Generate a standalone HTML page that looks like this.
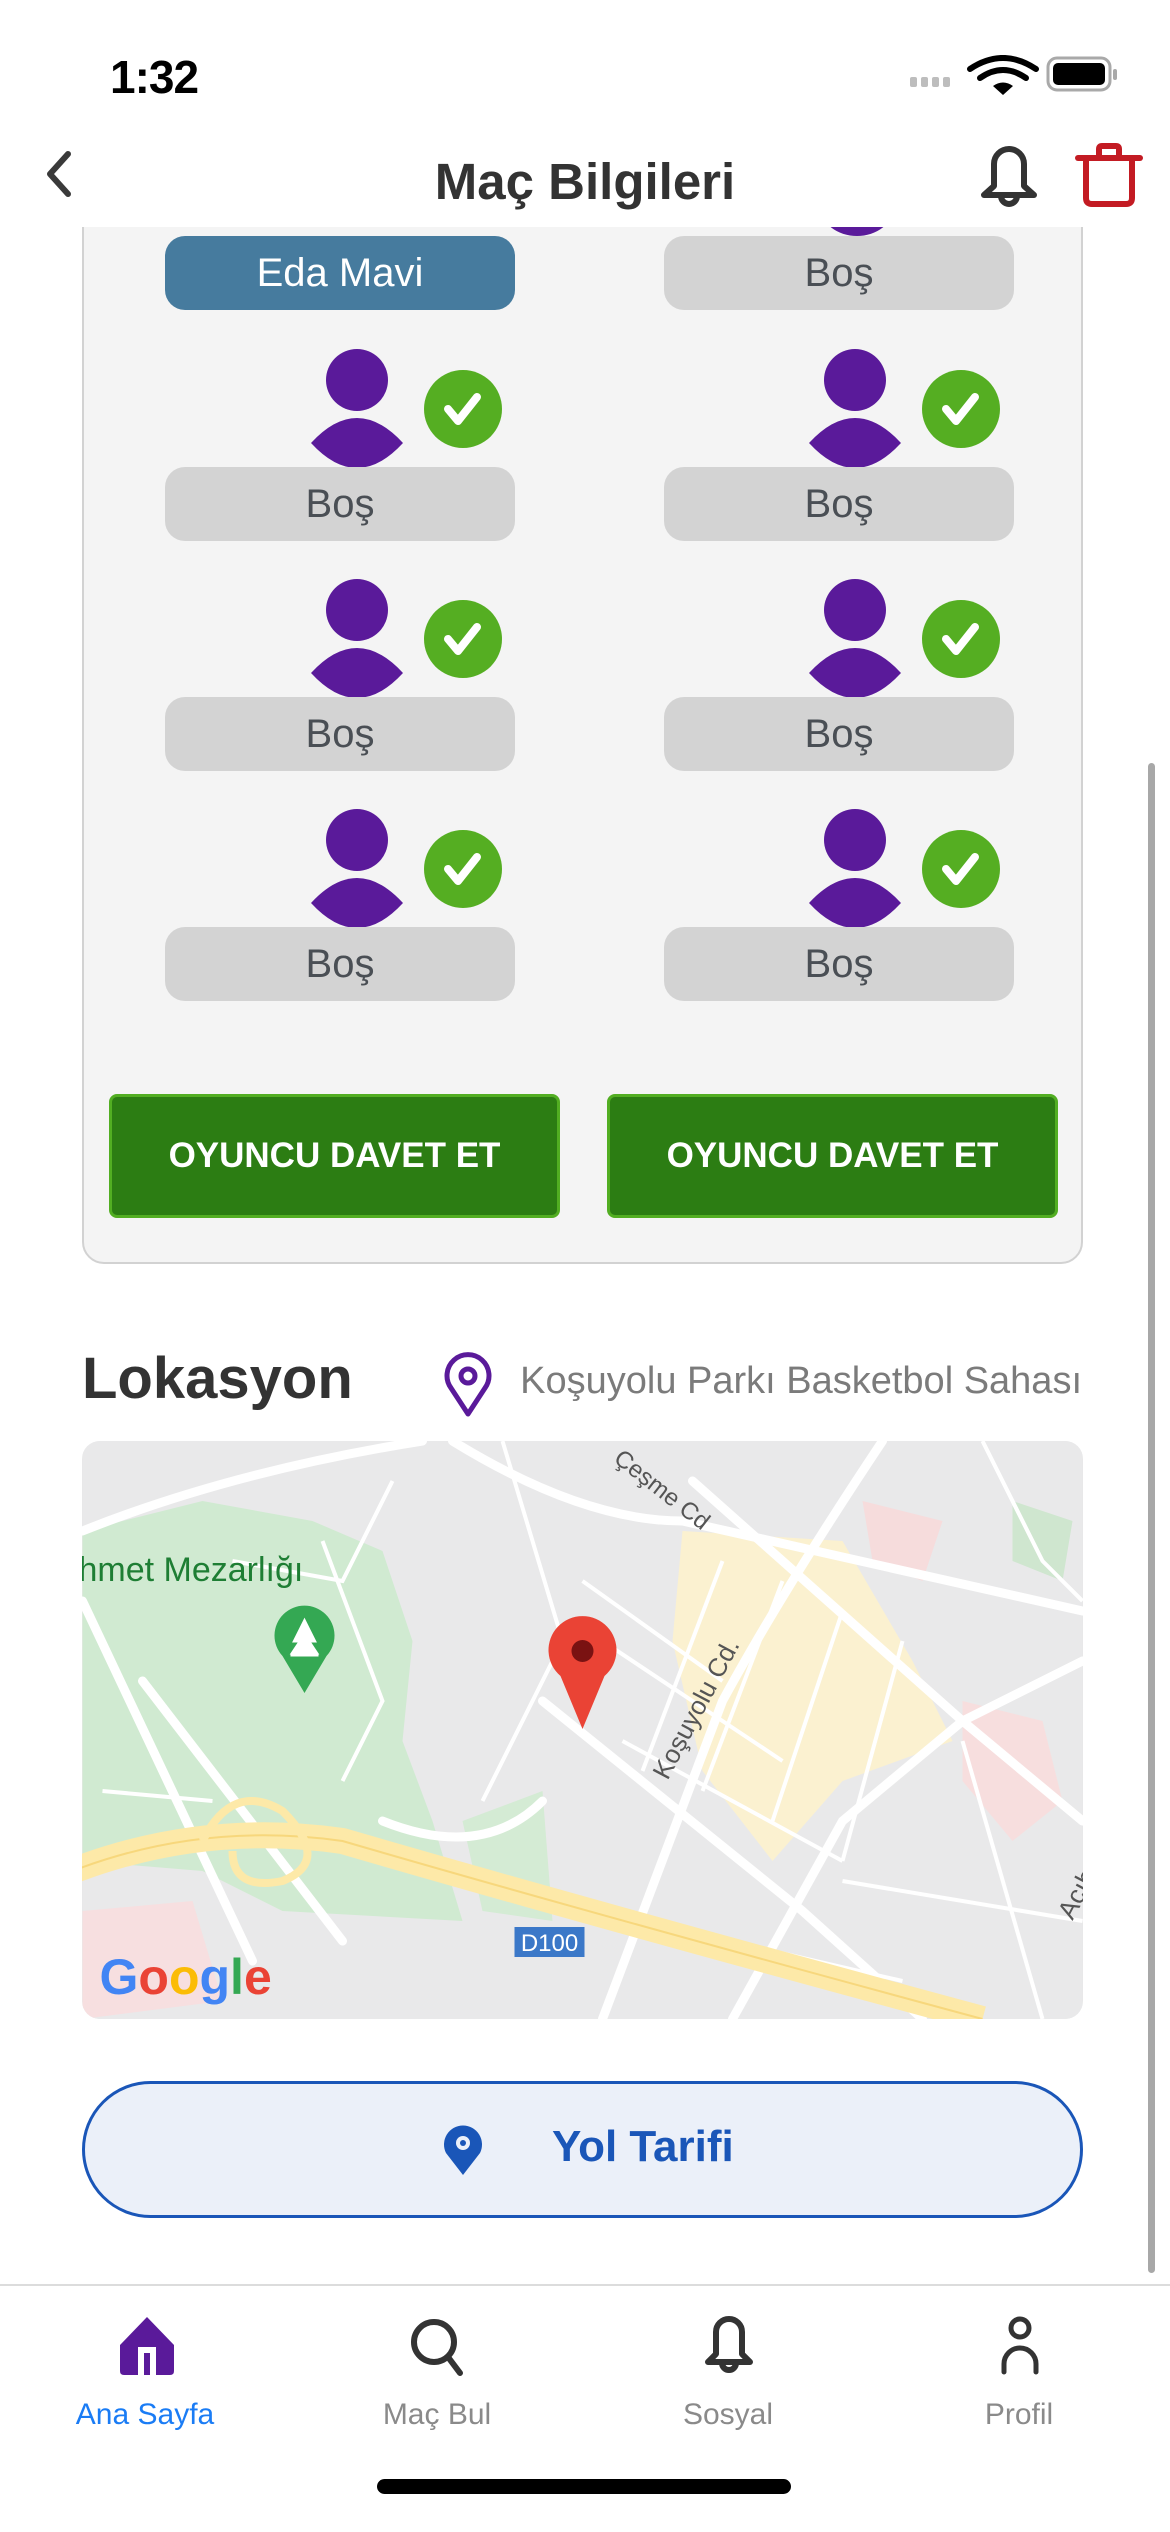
<!DOCTYPE html>
<html><head><meta charset="utf-8">
<style>
*{margin:0;padding:0;box-sizing:border-box}
html,body{width:1170px;height:2532px;background:#fff;overflow:hidden;font-family:"Liberation Sans",Arial,sans-serif}
.a{position:absolute}
.pill{position:absolute;width:350px;height:74px;border-radius:20px;background:#d3d3d3;color:#4a4f55;font-size:40px;text-align:center;line-height:74px}
.btn{position:absolute;top:1094px;width:451px;height:124px;background:#2c7d13;border:3px solid #52ae22;border-radius:8px;color:#fff;font-weight:bold;font-size:35px;text-align:center;line-height:118px}
.tab{position:absolute;top:2398px;width:240px;text-align:center;font-size:30px;color:#8a8a8a}
</style></head><body>

<!-- card -->
<div class="a" style="left:82px;top:180px;width:1001px;height:1084px;background:#f4f4f4;border:2px solid #d2d2d2;border-radius:22px"></div>
<!-- top right partial avatar -->
<div class="a" style="left:821px;top:210px;width:72px;height:26px;overflow:hidden"><div style="margin-top:-30px;width:72px;height:56px;border-radius:50%;background:#5a1a9a"></div></div>
<div class="a" style="left:0;top:0;width:1170px;height:227px;background:#fff"></div>

<!-- status bar -->
<div class="a" style="left:110px;top:50px;font-size:46px;font-weight:bold;color:#000;letter-spacing:-1px">1:32</div>
<svg class="a" style="left:900px;top:55px" width="240" height="40" viewBox="0 0 240 40">
  <g fill="#bdbdbd"><rect x="10" y="22" width="7" height="10" rx="2"/><rect x="21" y="22" width="7" height="10" rx="2"/><rect x="32" y="22" width="7" height="10" rx="2"/><rect x="43" y="22" width="7" height="10" rx="2"/></g>
  <path d="M70 14 Q103 -8 136 14" stroke="#000" stroke-width="6" fill="none" stroke-linecap="round"/>
  <path d="M80 23 Q103 7 126 23" stroke="#000" stroke-width="6" fill="none" stroke-linecap="round"/>
  <path d="M93 31 L103 40 L113 31 Q103 24 93 31Z" fill="#000"/>
  <rect x="148" y="3" width="62" height="32" rx="9" fill="none" stroke="#a9a9a9" stroke-width="3"/>
  <rect x="153" y="8" width="52" height="22" rx="5" fill="#000"/>
  <rect x="213" y="14" width="4" height="11" rx="2" fill="#a9a9a9"/>
</svg>

<!-- nav -->
<svg class="a" style="left:40px;top:148px" width="40" height="52"><path d="M28 6 L10 26 L28 46" stroke="#3a3a3a" stroke-width="6" fill="none" stroke-linecap="round" stroke-linejoin="round"/></svg>
<div class="a" style="left:0;width:1170px;top:152px;text-align:center;font-size:51px;font-weight:bold;color:#333">Maç Bilgileri</div>
<svg class="a" style="left:976px;top:140px" width="66" height="70" viewBox="0 0 66 70">
  <path d="M18 46 V24 A15 15 0 0 1 48 24 V46 L58 55 H8 Z" fill="none" stroke="#333" stroke-width="6" stroke-linejoin="round"/>
  <path d="M25 56 A8 8 0 0 0 41 56" fill="none" stroke="#333" stroke-width="6"/>
</svg>
<svg class="a" style="left:1072px;top:140px" width="74" height="70" viewBox="0 0 74 70">
  <path d="M6 18 H68" stroke="#c31b23" stroke-width="6" stroke-linecap="round"/>
  <path d="M27 17 V9 Q27 6 30 6 H44 Q47 6 47 9 V17" fill="none" stroke="#c31b23" stroke-width="6"/>
  <path d="M14 18 V58 Q14 64 20 64 H54 Q60 64 60 58 V18" fill="none" stroke="#c31b23" stroke-width="6"/>
</svg>

<div class="pill" style="left:165px;top:236px;background:#467b9e;color:#fff">Eda Mavi</div>
<div class="pill" style="left:664px;top:236px">Boş</div>

<!-- rows -->
<svg class="a" style="left:0;top:0" width="1170" height="1000">
<defs>
  <g id="av">
    <circle cx="0" cy="-87" r="31" fill="#5a1a9a"/>
    <path d="M-46 -24 Q0 -74 46 -24 Q0 26 -46 -24Z" fill="#5a1a9a"/>
    <circle cx="106" cy="-58" r="39" fill="#55ae22"/>
    <path d="M91 -58 L101 -46 L120 -70" stroke="#fff" stroke-width="8" fill="none" stroke-linecap="round" stroke-linejoin="round"/>
  </g>
</defs>
<use href="#av" x="357" y="467"/><use href="#av" x="855" y="467"/>
<use href="#av" x="357" y="697"/><use href="#av" x="855" y="697"/>
<use href="#av" x="357" y="927"/><use href="#av" x="855" y="927"/>
</svg>
<div class="pill" style="left:165px;top:467px">Boş</div>
<div class="pill" style="left:664px;top:467px">Boş</div>
<div class="pill" style="left:165px;top:697px">Boş</div>
<div class="pill" style="left:664px;top:697px">Boş</div>
<div class="pill" style="left:165px;top:927px">Boş</div>
<div class="pill" style="left:664px;top:927px">Boş</div>

<div class="btn" style="left:109px">OYUNCU DAVET ET</div>
<div class="btn" style="left:607px">OYUNCU DAVET ET</div>

<!-- location -->
<div class="a" style="left:82px;top:1345px;font-size:58px;font-weight:bold;color:#333">Lokasyon</div>
<svg class="a" style="left:442px;top:1352px" width="52" height="66" viewBox="0 0 52 66">
  <path d="M26 62 L9 36 A21 21 0 1 1 43 36 Z" fill="none" stroke="#5a1a9a" stroke-width="5" stroke-linejoin="round"/>
  <circle cx="26" cy="24" r="7" fill="none" stroke="#5a1a9a" stroke-width="5"/>
</svg>
<div class="a" style="right:88px;top:1360px;font-size:38px;color:#7b7b7b;white-space:nowrap">Koşuyolu Parkı Basketbol Sahası</div>

<!-- map -->
<div class="a" style="left:82px;top:1441px;width:1001px;height:578px;border-radius:18px;overflow:hidden;background:#e8e8e8">
<svg width="1001" height="578" viewBox="0 0 1000 578">
  <rect width="1000" height="578" fill="#e9e9ea"/>
  <path d="M0 90 L120 60 L230 80 L300 110 L330 200 L320 300 L350 380 L380 480 L200 470 L120 430 L0 420Z" fill="#d0ead1"/>
  <path d="M380 380 L460 350 L470 480 L400 470Z" fill="#d4ebd4"/>
  <path d="M600 90 L760 100 L830 220 L870 300 L760 340 L690 420 L620 330 L590 200Z" fill="#fbf1d0"/>
  <path d="M780 60 L860 80 L840 140 L790 120Z" fill="#f6dcdc"/>
  <path d="M880 260 L960 280 L980 360 L930 400 L880 340Z" fill="#f7dede"/>
  <path d="M0 470 L110 460 L140 560 L0 578Z" fill="#f7dfe0"/>
  <path d="M930 60 L990 80 L980 140 L930 120Z" fill="#cfe6cf"/>
  <g stroke="#fff" stroke-width="9" fill="none" stroke-linecap="round">
    <path d="M0 90 Q150 30 340 0"/><path d="M0 160 L170 520"/><path d="M60 240 L260 500"/>
    <path d="M370 0 Q500 80 600 80 L1000 170"/><path d="M800 0 Q700 150 640 260 L520 578"/>
    <path d="M610 40 L880 280 L1000 380"/><path d="M460 260 L720 470 L840 578"/>
    <path d="M300 380 Q400 420 460 360"/><path d="M1000 220 L880 280 L760 380 L650 578"/>
  </g>
  <g stroke="#fff" stroke-width="4" fill="none">
    <path d="M420 0 L480 200 L400 360"/><path d="M500 140 L640 240"/><path d="M520 200 L700 320"/><path d="M540 300 L760 420"/>
    <path d="M640 120 L560 330"/><path d="M700 140 L620 350"/><path d="M760 170 L690 380"/><path d="M820 200 L760 420"/>
    <path d="M880 300 L960 578"/><path d="M760 440 L1000 480"/><path d="M150 120 L260 140 L310 40"/><path d="M20 350 L130 360"/>
    <path d="M560 480 L820 540"/><path d="M900 0 L960 120 L1000 160"/><path d="M240 100 L300 260 L260 340"/>
  </g>
  <path d="M-10 430 Q120 380 260 400 Q500 470 900 578" stroke="#fde9a8" stroke-width="26" fill="none"/>
  <path d="M-10 430 Q120 380 260 400 Q500 470 900 578" stroke="#f7d77c" stroke-width="2" fill="none"/>
  <path d="M120 400 Q150 340 200 370 Q250 420 200 440 Q150 450 150 410" stroke="#fde9a8" stroke-width="8" fill="none"/>
  <text x="-4" y="140" font-size="34" fill="#1e7e34" font-family="Liberation Sans,sans-serif">hmet Mezarlığı</text>
  <text transform="translate(530 20) rotate(38)" font-size="24" fill="#555" font-family="Liberation Sans,sans-serif">Çeşme Cd</text>
  <text transform="translate(585 340) rotate(-62)" font-size="26" fill="#555" font-family="Liberation Sans,sans-serif">Koşuyolu Cd.</text>
  <text transform="translate(990 480) rotate(-62)" font-size="26" fill="#555" font-family="Liberation Sans,sans-serif">Acıbade</text>
  <rect x="432" y="486" width="70" height="30" fill="#3b78c8"/>
  <text x="467" y="510" font-size="24" fill="#fff" text-anchor="middle" font-family="Liberation Sans,sans-serif">D100</text>
  <path d="M222 252 L200 215 A30 30 0 1 1 244 215 Z" fill="#34a853"/>
  <path d="M222 180 L212 200 H218 L210 212 H234 L226 200 H232 Z M208 214 H236" stroke="#fff" stroke-width="3" fill="#fff"/>
  <path d="M500 288 L478 235 A34 34 0 1 1 522 235 Z" fill="#ea4335"/>
  <circle cx="500" cy="210" r="11" fill="#7a1212"/>
  <text x="17" y="553" font-size="50" font-family="Liberation Sans,sans-serif" font-weight="bold"><tspan fill="#4285f4">G</tspan><tspan fill="#ea4335">o</tspan><tspan fill="#fbbc05">o</tspan><tspan fill="#4285f4">g</tspan><tspan fill="#34a853">l</tspan><tspan fill="#ea4335">e</tspan></text>
</svg>
</div>

<!-- Yol tarifi -->
<div class="a" style="left:82px;top:2081px;width:1001px;height:137px;border:3px solid #1a56b8;border-radius:69px;background:#ebf0f9"></div>
<svg class="a" style="left:441px;top:2123px" width="44" height="54" viewBox="0 0 44 54">
  <path d="M22 52 L5 30 A19 19 0 1 1 39 30 Z" fill="#1a56b8"/>
  <circle cx="22" cy="20" r="7" fill="#ebf0f9"/><circle cx="22" cy="20" r="3" fill="#1a56b8"/>
</svg>
<div class="a" style="left:552px;top:2122px;font-size:44px;font-weight:bold;color:#1a56b8">Yol Tarifi</div>

<!-- scrollbar -->
<div class="a" style="left:1148px;top:763px;width:7px;height:1510px;border-radius:4px;background:#a8a8a8"></div>

<!-- tab bar -->
<div class="a" style="left:0;top:2284px;width:1170px;height:2px;background:#dcdcdc"></div>
<svg class="a" style="left:118px;top:2315px" width="58" height="62" viewBox="0 0 58 62">
  <path d="M29 2 L56 30 V56 Q56 60 52 60 H6 Q2 60 2 56 V30 Z" fill="#5a1a9a"/>
  <rect x="20" y="32" width="18" height="28" fill="#fff"/><rect x="26" y="38" width="6" height="22" fill="#5a1a9a"/>
</svg>
<svg class="a" style="left:408px;top:2315px" width="62" height="62" viewBox="0 0 62 62">
  <circle cx="26" cy="27" r="20" fill="none" stroke="#333" stroke-width="6"/>
  <path d="M40 42 L52 58" stroke="#333" stroke-width="6" stroke-linecap="round"/>
</svg>
<svg class="a" style="left:702px;top:2314px" width="54" height="64" viewBox="0 0 54 64">
  <path d="M14 40 V18 A13 13 0 0 1 40 18 V40 L48 48 H6 Z" fill="none" stroke="#333" stroke-width="6" stroke-linejoin="round"/>
  <path d="M20 49 A7 7 0 0 0 34 49" fill="none" stroke="#333" stroke-width="6"/>
</svg>
<svg class="a" style="left:998px;top:2314px" width="44" height="64" viewBox="0 0 44 64">
  <circle cx="22" cy="14" r="9" fill="none" stroke="#333" stroke-width="5"/>
  <path d="M6 58 V50 A16 16 0 0 1 38 50 V58" fill="none" stroke="#333" stroke-width="5" stroke-linecap="round"/>
</svg>
<div class="tab" style="left:25px;color:#1a7cf5">Ana Sayfa</div>
<div class="tab" style="left:317px">Maç Bul</div>
<div class="tab" style="left:608px">Sosyal</div>
<div class="tab" style="left:899px">Profil</div>

<div class="a" style="left:377px;top:2479px;width:414px;height:15px;border-radius:8px;background:#000"></div>
</body></html>
